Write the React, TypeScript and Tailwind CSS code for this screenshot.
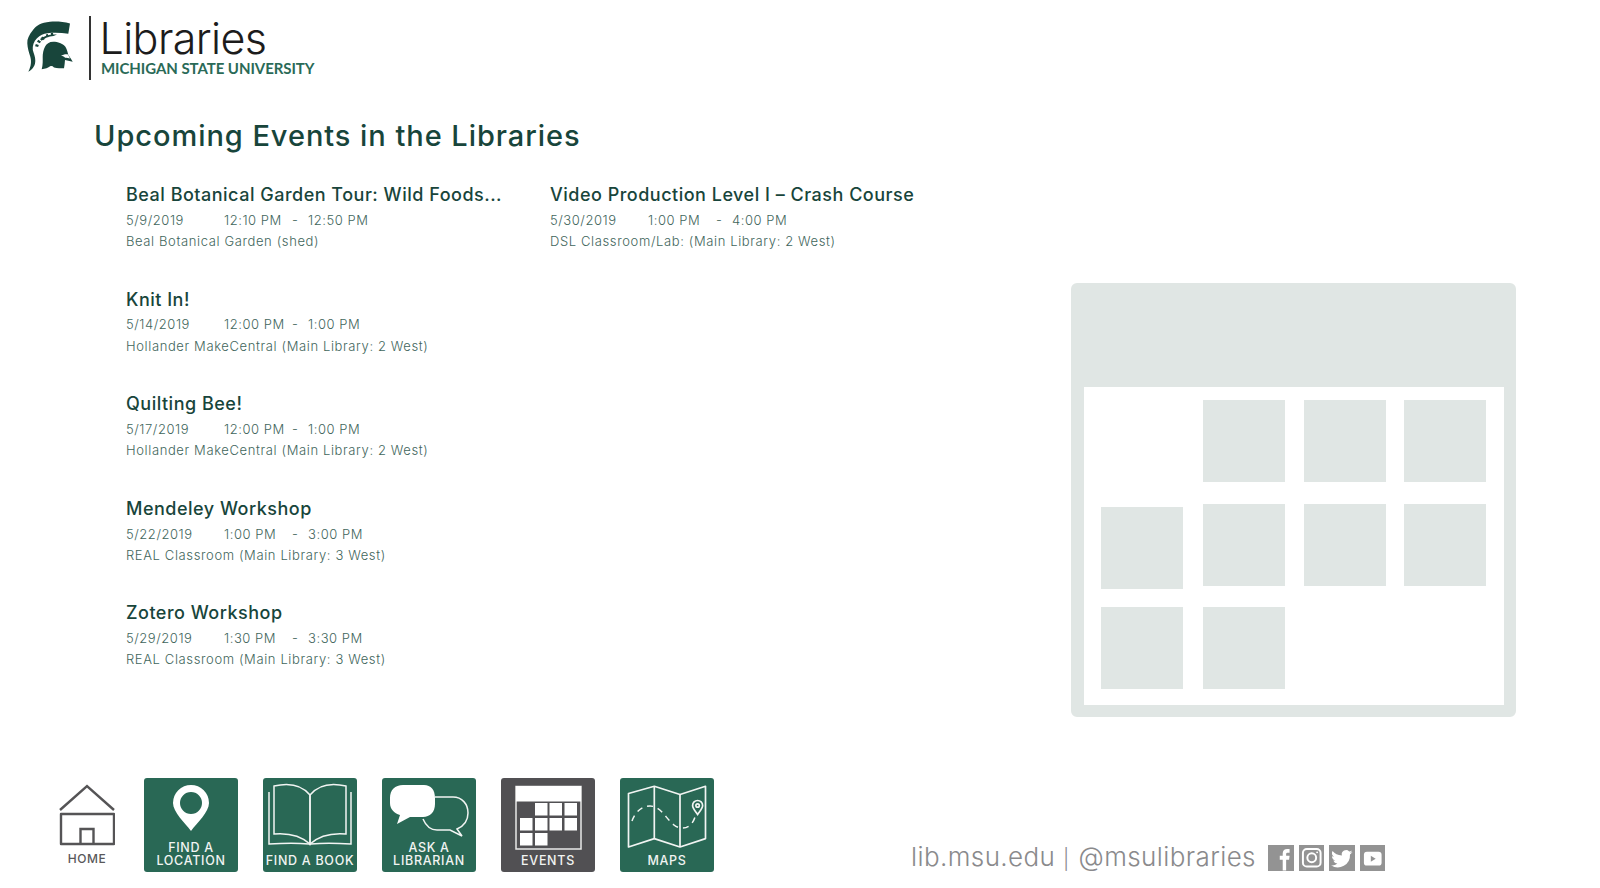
import type { ReactNode } from 'react'

const font = "font-['Inter','Liberation_Sans',sans-serif]"

type EventItem = {
  title: string
  date: string
  start: string
  end: string
  place: string
}

const leftEvents: EventItem[] = [
  { title: 'Beal Botanical Garden Tour: Wild Foods...', date: '5/9/2019', start: '12:10 PM', end: '12:50 PM', place: 'Beal Botanical Garden (shed)' },
  { title: 'Knit In!', date: '5/14/2019', start: '12:00 PM', end: '1:00 PM', place: 'Hollander MakeCentral (Main Library: 2 West)' },
  { title: 'Quilting Bee!', date: '5/17/2019', start: '12:00 PM', end: '1:00 PM', place: 'Hollander MakeCentral (Main Library: 2 West)' },
  { title: 'Mendeley Workshop', date: '5/22/2019', start: '1:00 PM', end: '3:00 PM', place: 'REAL Classroom (Main Library: 3 West)' },
  { title: 'Zotero Workshop', date: '5/29/2019', start: '1:30 PM', end: '3:30 PM', place: 'REAL Classroom (Main Library: 3 West)' },
]

const rightEvent: EventItem = {
  title: 'Video Production Level I – Crash Course',
  date: '5/30/2019',
  start: '1:00 PM',
  end: '4:00 PM',
  place: 'DSL Classroom/Lab: (Main Library: 2 West)',
}

function EventBlock({ event }: { event: EventItem }) {
  return (
    <div className="h-[104.6px]">
      <h3 className="h-[26px] text-[18px] leading-[26px] font-medium tracking-[0.5px] text-[#18453b] whitespace-nowrap">{event.title}</h3>
      <div className="mt-[2px] flex h-[21px] items-center text-[13px] font-light tracking-[0.55px] text-[#3f665c] whitespace-nowrap">
        <span className="w-[98px]">{event.date}</span>
        <span className="w-[68px]">{event.start}</span>
        <span className="w-[16px]">-</span>
        <span>{event.end}</span>
      </div>
      <p className="h-[21px] text-[13px] leading-[21px] font-light tracking-[0.62px] text-[#3f665c] whitespace-nowrap">{event.place}</p>
    </div>
  )
}

function Spartan() {
  return (
    <svg viewBox="0 0 48 56" className="h-[56px] w-[48px]" fill="#18453b">
      <path d="M43 2.500C36 .5 29 .2 23 .7 14 1.500 9 4.500 6 9 2 14 0 18 .3 22.300c.2 5 1.700 9 3 13.400 1.200 4.300 1 9.300-2 15 5-2.700 7-6.700 7-11 0-4-1.500-7-2.500-10.700-.5-4 1-8.500 4.200-11.700 3-3 6.500-4.500 10.500-5 7-.8 14-.4 20.800.4z" />
      <path d="M30 13.500c-7-.6-13 1-17 4.500l1.500 1.800c3-2.500 7-4.500 12-4.800zM14 20.500l-2.800-1.800-1.200 2 2.800 1.600zm-2.200 3.500-3-1-.7 2.200 3 .8zm6-6-2-2.500-1.800 1.200 2 2.500zm4-2-1-3-2 .6 1 3zm4.500-1-.3-3.200-2.200.2.300 3.200z" />
      <path d="M26.300 20.700c-4 0-7 2-8.300 5-1.500 3-2.300 6.500-2.300 10 0 4 .3 8-1 12.600 3.500-.3 6.500-1.500 8.500-3 1.300-.6 2.500-.2 3.800 1.200 3.300.8 6.700.8 10 .8.500-2.700.8-5.500 1-8.300l7.700 1.800c-1.200-2.500-3-4.800-4.400-6.800-.8-3-1.300-5.900-2.900-8.300-2.800-3.500-7.600-5-12.100-5z" />
      <path d="M34 35c2-1.500 5-2 7-1.500l2 4c-2-.8-3.500-1-5-.8-.5-1-2-1.700-4-1.700z" fill="#fff" />
    </svg>
  )
}

function Tile({ dark, label, children }: { dark?: boolean; label: string[]; children: ReactNode }) {
  return (
    <div className={`flex h-[94px] w-[94px] flex-col items-center justify-between rounded-[3px] pb-[5px] ${dark ? 'bg-[#515053]' : 'bg-[#296855]'}`}>
      <div className="flex-1">{children}</div>
      <div className="text-center text-[12.5px] leading-[12.5px] font-medium tracking-[0.7px] text-[#f1f4f2]">
        {label.map((line) => (
          <div key={line}>{line}</div>
        ))}
      </div>
    </div>
  )
}

function NavBar() {
  return (
    <div className="flex items-center gap-[25px]">
      <div className="ml-[57px] mr-[2px] flex w-[60px] flex-col items-center">
        <svg viewBox="0 0 56 62" className="h-[62px] w-[56px]" fill="none" stroke="#555456" strokeWidth="2.4">
          <path d="M1 26 28 2l27 24" />
          <path d="M2 30h53v30H2z" strokeLinejoin="round" />
          <path d="M21.500 60V45h13v15" />
        </svg>
        <span className="mt-[6px] text-[12px] leading-[14px] font-medium tracking-[0.5px] text-[#59585a]">HOME</span>
      </div>

      <Tile label={['FIND A', 'LOCATION']}>
        <svg viewBox="0 0 94 64" className="h-[64px] w-[94px]" fill="#fff">
          <path fillRule="evenodd" d="M47 7a18 18 0 0 1 18 18c0 9-12 20-18 28-6-8-18-19-18-28A18 18 0 0 1 47 7zm0 7a11 11 0 1 0 0 22 11 11 0 0 0 0-22z" />
        </svg>
      </Tile>

      <Tile label={['FIND A BOOK']}>
        <svg viewBox="0 0 94 76" className="h-[76px] w-[94px]" fill="none" stroke="#f1f4f2" strokeWidth="1.5">
          <path d="M11 8c13-3 27-2 36 9v49c-10-9-24-11-36-10z" />
          <path d="M83 8c-13-3-27-2-36 9v49c10-9 24-11 36-10z" />
          <path d="M6 14v52c15-1 30-1 40 0h2c10-1 25-1 40 0V14" />
        </svg>
      </Tile>

      <Tile label={['ASK A', 'LIBRARIAN']}>
        <svg viewBox="0 0 94 64" className="h-[64px] w-[94px]">
          <path d="M53 19h18c9 0 15 7 15 16 0 8-4 13-11 16l5 7-12-6H55c-6 0-11-4-14-11" fill="none" stroke="#f1f4f2" strokeWidth="1.5" />
          <path d="M21 7h21c7 0 11 5 11 13v6c0 8-5 13-12 13H28l-13 7 3-9c-6-2-10-6-10-12v-5c0-8 5-13 13-13z" fill="#fff" />
        </svg>
      </Tile>

      <Tile dark label={['EVENTS']}>
        <svg viewBox="0 0 94 76" className="h-[76px] w-[94px]">
          <rect x="15" y="8.500" width="65" height="62.500" fill="#515053" stroke="#e8e8e8" strokeWidth="1.5" />
          <rect x="15" y="8" width="65" height="15.500" fill="#fff" />
          {[[34, 25], [48.5, 25], [63.5, 25], [19, 40], [34, 40], [48.5, 40], [63.5, 40], [19, 55], [34, 55]].map(([x, y]) => (
            <rect key={`${x}-${y}`} x={x} y={y} width="12.500" height="12.500" fill="#fff" />
          ))}
        </svg>
      </Tile>

      <Tile label={['MAPS']}>
        <svg viewBox="0 0 94 76" className="h-[76px] w-[94px]" fill="none" stroke="#f1f4f2" strokeWidth="1.7">
          <path d="M8.500 15.500 34.300 8.300 60 16.500l25.500-8.200v52.300L60 69l-25.700-8.400L8.500 69z" strokeLinejoin="round" />
          <path d="M34.300 8.300v52.300M60 16.500V69" />
          <path d="M12 43c3-9 10-15 18-15 11 0 16 13 24 19 6 5 17 5 21-8" strokeDasharray="6 5" strokeWidth="1.500" />
          <path d="M77.600 22.500a5 5 0 0 0-5 5c0 3 3 6 5 9 2-3 5-6 5-9a5 5 0 0 0-5-5z" />
          <circle cx="77.600" cy="27.500" r="1.700" />
        </svg>
      </Tile>
    </div>
  )
}

function Social() {
  return (
    <div className="flex items-center">
      <span className="text-[26px] leading-[30px] font-light tracking-[0.4px] text-[#8a8a8c] whitespace-nowrap">
        lib.msu.edu <span className="text-[20px] font-light tracking-[1.5px]">|</span> @msulibraries
      </span>
      <div className="ml-[12.5px] flex gap-[5px]">
        <div className="h-[25.5px] w-[25.5px] bg-[#939393]">
          <svg viewBox="0 0 26 26" className="h-full w-full" fill="#fff"><path d="M15 26V15h-3v-4h3V8.500C15 5.500 17 4 19.500 4H22v4h-1.500C19 8 18.500 8.500 18.500 9.500V11H22l-.5 4h-3v11z" /></svg>
        </div>
        <div className="h-[25.5px] w-[25.5px] bg-[#939393]">
          <svg viewBox="0 0 26 26" className="h-full w-full" fill="none" stroke="#fff" strokeWidth="2"><rect x="4" y="4" width="18" height="18" rx="4" /><circle cx="13" cy="13" r="4.500" /><circle cx="18.500" cy="7.500" r="1" fill="#fff" stroke="none" /></svg>
        </div>
        <div className="h-[25.5px] w-[25.5px] bg-[#939393]">
          <svg viewBox="0 0 26 26" className="h-full w-full" fill="#fff"><path d="M24 7.200c-.8.4-1.600.6-2.500.7.900-.5 1.600-1.400 1.900-2.400-.9.500-1.800.9-2.800 1.100a4.400 4.400 0 0 0-7.500 4C9 10.400 5.800 8.600 3.600 6c-1.200 2-.6 4.600 1.400 5.900-.7 0-1.400-.2-2-.5 0 2.100 1.500 4 3.500 4.400-.6.200-1.300.2-2 .1.600 1.800 2.200 3 4.100 3A8.900 8.900 0 0 1 2 20.700 12.500 12.500 0 0 0 21.400 9.600c1-.7 1.900-1.500 2.600-2.400z" /></svg>
        </div>
        <div className="h-[25.5px] w-[25.5px] bg-[#939393]">
          <svg viewBox="0 0 26 26" className="h-full w-full"><rect x="4" y="7" width="18" height="14" rx="3" fill="#fff" /><path d="M11 11v6l5-3z" fill="#939393" /></svg>
        </div>
      </div>
    </div>
  )
}

function CalendarArt() {
  return (
    <svg viewBox="0 0 445 434" className="h-[434px] w-[445px]">
      <path fillRule="evenodd" fill="#e0e6e4" d="M6 0h433a6 6 0 0 1 6 6v422a6 6 0 0 1-6 6H6a6 6 0 0 1-6-6V6a6 6 0 0 1 6-6zM13 104v318h420V104z" />
      {[[132, 117], [233, 117], [333, 117], [30, 224], [132, 221], [233, 221], [333, 221], [30, 324], [132, 324]].map(([x, y]) => (
        <rect key={`${x}-${y}`} x={x} y={y} width="82" height="82" fill="#e0e6e4" />
      ))}
    </svg>
  )
}

export default function App() {
  return (
    <div className={`h-[888px] w-[1600px] overflow-hidden bg-white ${font}`}>
      <header className="flex h-[96px] items-start pl-[27px] pt-[16px]">
        <div className="mt-[5px]"><Spartan /></div>
        <div className="ml-[14px] h-[64px] w-[1.5px] bg-[#333]" />
        <div className="ml-[9px]">
          <div className="text-[43px] leading-[44px] font-light tracking-[-0.6px] text-[#1c1c1c]">Libraries</div>
          <div className="ml-[1.5px] font-['Lato',sans-serif] text-[15px] leading-[16px] font-bold tracking-[-0.06px] text-[#2a6a57] whitespace-nowrap">MICHIGAN STATE UNIVERSITY</div>
        </div>
      </header>

      <main className="flex h-[669px] items-start">
        <div className="ml-[94px] w-[977px]">
          <h1 className="mt-[23px] text-[29px] leading-[34px] font-medium tracking-[0.95px] text-[#18453b]">Upcoming Events in the Libraries</h1>
          <div className="mt-[29px] ml-[32px] flex">
            <div className="w-[424px]">
              {leftEvents.map((event) => (
                <EventBlock key={event.title} event={event} />
              ))}
            </div>
            <EventBlock event={rightEvent} />
          </div>
        </div>
        <div className="mt-[187px]"><CalendarArt /></div>
      </main>

      <footer className="flex h-[123px] items-start pt-[13px]">
        <NavBar />
        <div className="ml-[197px] mt-[64px]"><Social /></div>
      </footer>
    </div>
  )
}
